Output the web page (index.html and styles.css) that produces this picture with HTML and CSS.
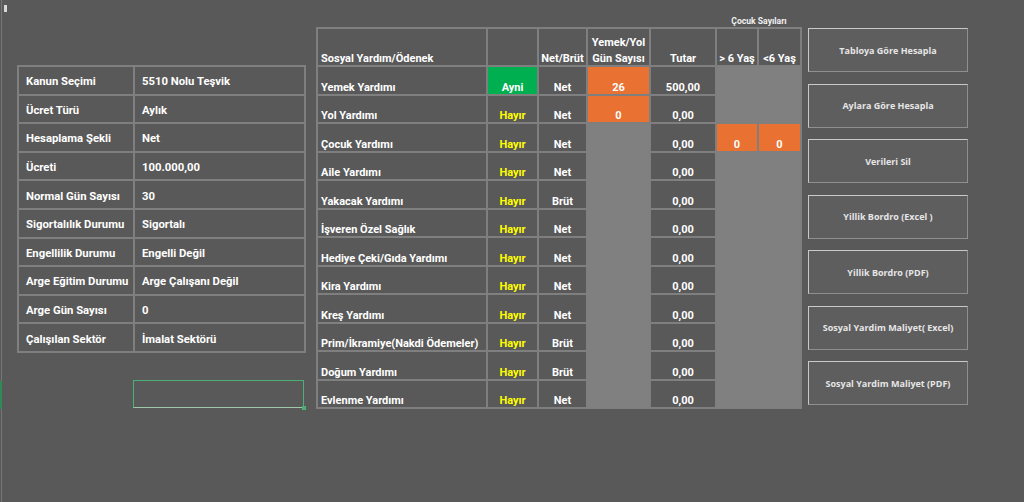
FILE: index.html
```html
<!DOCTYPE html>
<html lang="tr">
<head>
<meta charset="utf-8">
<title>Sosyal Yardım Hesaplama</title>
<link rel="stylesheet" href="styles.css">
</head>
<body>
<div class="edge"><span class="edge-mark"></span></div>
<span class="cursor"></span>
<div class="sheet">
  <div class="left-col">
    <div class="kv">
      <div class="k">Kanun Seçimi</div><div class="v">5510 Nolu Teşvik</div>
      <div class="k">Ücret Türü</div><div class="v">Aylık</div>
      <div class="k">Hesaplama Şekli</div><div class="v">Net</div>
      <div class="k">Ücreti</div><div class="v">100.000,00</div>
      <div class="k">Normal Gün Sayısı</div><div class="v">30</div>
      <div class="k">Sigortalılık Durumu</div><div class="v">Sigortalı</div>
      <div class="k">Engellilik Durumu</div><div class="v">Engelli Değil</div>
      <div class="k">Arge Eğitim Durumu</div><div class="v">Arge Çalışanı Değil</div>
      <div class="k">Arge Gün Sayısı</div><div class="v">0</div>
      <div class="k">Çalışılan Sektör</div><div class="v">İmalat Sektörü</div>
    </div>
    <div class="selected-cell"><span class="handle"></span></div>
  </div>

  <div class="mid-col">
    <div class="group-label"><span>Çocuk Sayıları</span></div>
    <div class="grid">
      <div class="c h first">Sosyal Yardım/Ödenek</div>
      <div class="c h"></div>
      <div class="c h">Net/Brüt</div>
      <div class="c h two"><span class="l1">Yemek/Yol</span><span>Gün Sayısı</span></div>
      <div class="c h">Tutar</div>
      <div class="c h">&gt; 6 Yaş</div>
      <div class="c h">&lt;6 Yaş</div>

      <div class="blk blk-gun"></div>
      <div class="blk blk-kids-top"></div>
      <div class="blk blk-kids-bottom"></div>

      <div class="c first">Yemek Yardımı</div>
      <div class="c green">Ayni</div>
      <div class="c">Net</div>
      <div class="c orange">26</div>
      <div class="c">500,00</div>

      <div class="c first">Yol Yardımı</div>
      <div class="c yes">Hayır</div>
      <div class="c">Net</div>
      <div class="c orange">0</div>
      <div class="c">0,00</div>

      <div class="c first">Çocuk Yardımı</div>
      <div class="c yes">Hayır</div>
      <div class="c">Net</div>
      <div class="c">0,00</div>
      <div class="c orange">0</div>
      <div class="c orange">0</div>

      <div class="c first">Aile Yardımı</div>
      <div class="c yes">Hayır</div>
      <div class="c">Net</div>
      <div class="c">0,00</div>

      <div class="c first">Yakacak Yardımı</div>
      <div class="c yes">Hayır</div>
      <div class="c">Brüt</div>
      <div class="c">0,00</div>

      <div class="c first">İşveren Özel Sağlık</div>
      <div class="c yes">Hayır</div>
      <div class="c">Net</div>
      <div class="c">0,00</div>

      <div class="c first">Hediye Çeki/Gıda Yardımı</div>
      <div class="c yes">Hayır</div>
      <div class="c">Net</div>
      <div class="c">0,00</div>

      <div class="c first">Kira Yardımı</div>
      <div class="c yes">Hayır</div>
      <div class="c">Net</div>
      <div class="c">0,00</div>

      <div class="c first">Kreş Yardımı</div>
      <div class="c yes">Hayır</div>
      <div class="c">Net</div>
      <div class="c">0,00</div>

      <div class="c first">Prim/İkramiye(Nakdi Ödemeler)</div>
      <div class="c yes">Hayır</div>
      <div class="c">Brüt</div>
      <div class="c">0,00</div>

      <div class="c first">Doğum Yardımı</div>
      <div class="c yes">Hayır</div>
      <div class="c">Brüt</div>
      <div class="c">0,00</div>

      <div class="c first">Evlenme Yardımı</div>
      <div class="c yes">Hayır</div>
      <div class="c">Net</div>
      <div class="c">0,00</div>
    </div>
  </div>

  <div class="btn-col">
    <button class="btn">Tabloya Göre Hesapla</button>
    <button class="btn">Aylara Göre Hesapla</button>
    <button class="btn">Verileri Sil</button>
    <button class="btn">Yillik Bordro (Excel )</button>
    <button class="btn">Yillik Bordro (PDF)</button>
    <button class="btn">Sosyal Yardim Maliyet( Excel)</button>
    <button class="btn">Sosyal Yardim Maliyet (PDF)</button>
  </div>
</div>
</body>
</html>
```

FILE: styles.css
```css
html, body {
  margin: 0;
  padding: 0;
}
body {
  width: 1024px;
  height: 502px;
  overflow: hidden;
  background: #595959;
  font-family: Roboto, "Noto Sans", sans-serif;
  color: #ffffff;
  position: relative;
}
.edge {
  position: absolute;
  left: 0;
  top: 0;
  bottom: 0;
  width: 1px;
  border-right: 1px solid #767676;
}
.edge-mark {
  position: absolute;
  left: 0;
  top: 381px;
  width: 2px;
  height: 28px;
  background: #2e8b57;
}
.cursor {
  position: absolute;
  left: 4px;
  top: 5px;
  width: 3px;
  height: 7px;
  background: #d8d8d8;
}
.sheet {
  display: flex;
  align-items: flex-start;
  padding-left: 17px;
}

/* left key/value table */
.left-col {
  margin-top: 65px;
  display: flex;
  flex-direction: column;
}
.kv {
  display: grid;
  grid-template-columns: 114px 169px;
  grid-auto-rows: 26.6px;
  gap: 2px;
  padding: 2px;
  background: #7f7f7f;
}
.kv > div {
  background: #595959;
  font-weight: 700;
  font-size: 11.3px;
  display: flex;
  align-items: center;
  padding-left: 7px;
  padding-top: 3px;
  white-space: nowrap;
}
.selected-cell {
  margin-top: 27px;
  margin-left: 116px;
  width: 169px;
  height: 26px;
  border: 1px solid #4caf78;
  border-bottom-color: #9fc9ad;
  position: relative;
}
.handle {
  position: absolute;
  right: -3px;
  bottom: -3px;
  width: 4px;
  height: 4px;
  background: #4caf78;
}

/* middle table */
.mid-col {
  margin-left: 10px;
  margin-top: 15px;
  display: flex;
  flex-direction: column;
}
.group-label {
  height: 12px;
  display: flex;
  justify-content: flex-end;
  font-size: 8.6px;
  font-weight: 700;
  line-height: 12px;
  color: #f0f0f0;
}
.group-label span {
  width: 86px;
  text-align: center;
}
.grid {
  display: grid;
  grid-template-columns: 168px 49px 47px 61px 64px 40px 41px;
  grid-template-rows: 36px repeat(12, 26.5px);
  gap: 2px;
  padding: 2px;
  background: #7f7f7f;
}
.c {
  background: #595959;
  font-weight: 700;
  font-size: 11px;
  line-height: 13px;
  display: flex;
  align-items: flex-end;
  justify-content: center;
  text-align: center;
  padding-bottom: 0;
  white-space: nowrap;
}
.c.first {
  justify-content: flex-start;
  padding-left: 3px;
}
.c.two {
  flex-direction: column;
  align-items: center;
  justify-content: flex-end;
}
.c.two .l1 {
  margin-bottom: 3px;
}
.c.green {
  background: #00b050;
}
.c.orange {
  background: #e97132;
}
.c.yes {
  color: #ffff00;
}
.blk {
  background: #808080;
}
.blk-gun {
  grid-column: 4;
  grid-row: 4 / span 10;
}
.blk-kids-top {
  grid-column: 6 / span 2;
  grid-row: 2 / span 2;
}
.blk-kids-bottom {
  grid-column: 6 / span 2;
  grid-row: 5 / span 9;
}

/* buttons */
.btn-col {
  margin-left: 6px;
  margin-top: 28px;
  display: flex;
  flex-direction: column;
  gap: 11.5px;
}
.btn {
  width: 160px;
  height: 44px;
  margin: 0;
  padding: 0;
  background: #5e5e5e;
  border: 1px solid;
  border-color: #c9c9c9 #8f8f8f #8f8f8f #c9c9c9;
  color: #e6e6e6;
  font-family: "Open Sans", "Noto Sans", sans-serif;
  font-weight: 700;
  font-size: 9px;
  text-align: center;
}
```
